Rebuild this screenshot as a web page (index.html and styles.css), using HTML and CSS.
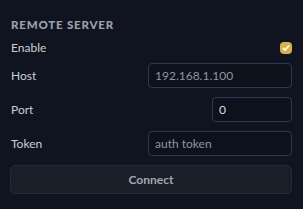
FILE: index.html
```html
<!DOCTYPE html>
<html lang="en">
<head>
    <meta charset="UTF-8">
    <title>Remote Server</title>
    <link rel="stylesheet" href="styles.css">
</head>
<body>
    <div class="panel">
        <div class="title">REMOTE SERVER</div>

        <div class="row">
            <span class="label">Enable</span>
            <span class="check">
                <svg width="8" height="8" viewBox="0 0 8 8">
                    <path d="M1.2 4.3 L3.1 6.1 L6.8 1.7" fill="none" stroke="#fff" stroke-width="1.5" stroke-linecap="round" stroke-linejoin="round"/>
                </svg>
            </span>
        </div>

        <div class="row field">
            <span class="label">Host</span>
            <input class="input wide" type="text" placeholder="192.168.1.100">
        </div>

        <div class="row field">
            <span class="label">Port</span>
            <input class="input narrow" type="text" value="0">
        </div>

        <div class="row field">
            <span class="label">Token</span>
            <input class="input wide" type="text" placeholder="auth token">
        </div>

        <button class="connect">Connect</button>
    </div>
</body>
</html>
```

FILE: styles.css
```css
* {
    margin: 0;
    padding: 0;
    box-sizing: border-box;
}

body {
    background: #0f1420;
    font-family: "Lato", "Noto Sans", sans-serif;
    color: #c9ced6;
}

.panel {
    display: flex;
    flex-direction: column;
    gap: 9px;
    padding: 18px 11px 0 10px;
}

.title {
    font-size: 11.5px;
    line-height: 14px;
    font-weight: 900;
    letter-spacing: 0.8px;
    color: #9ca2ad;
    padding-left: 1px;
}

.row {
    display: flex;
    justify-content: space-between;
    align-items: center;
    height: 13px;
}

.row.field {
    height: 25px;
}

.label {
    font-size: 12px;
    padding-left: 1px;
}

.check {
    width: 12px;
    height: 12px;
    border-radius: 4px;
    background: #d6b24c;
    display: flex;
    align-items: center;
    justify-content: center;
}

.input {
    height: 25px;
    border: 1px solid #2b3a50;
    border-radius: 4px;
    background: #0c111b;
    color: #d7dbe2;
    font-family: inherit;
    font-size: 12px;
    padding: 0 6px;
    outline: none;
}

.input::placeholder {
    color: #8e96a3;
}

.wide {
    width: 144px;
}

.narrow {
    width: 80px;
}

.connect {
    height: 29px;
    border: 1px solid #232a36;
    border-radius: 5px;
    background: #191e29;
    color: #a3a9b3;
    font-family: inherit;
    font-size: 12px;
    font-weight: 700;
}
```
